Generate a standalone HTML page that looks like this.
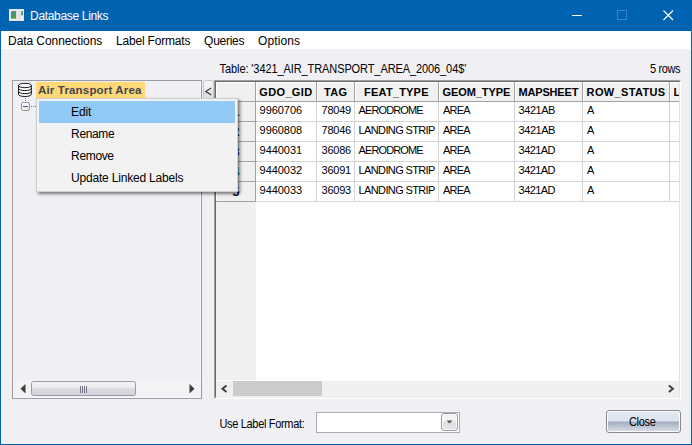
<!DOCTYPE html>
<html><head><meta charset="utf-8"><title>Database Links</title>
<style>
html,body{margin:0;padding:0;}
body{width:692px;height:445px;overflow:hidden;background:#efeff4;font-family:"Liberation Sans","DejaVu Sans",sans-serif;font-size:11px;color:#000;position:relative;}
.a{position:absolute;}
.t{position:absolute;white-space:nowrap;line-height:20px;height:20px;}
</style></head><body>
<div class="a" style="left:0;top:0;width:690px;height:444px;border-left:1px solid #0063b1;border-right:1px solid #0063b1;border-bottom:1px solid #0063b1;"></div>
<div class="a" style="left:0;top:0;width:692px;height:31px;background:#0063b1;"></div>
<svg class="a" style="left:9px;top:9px" width="16" height="12" viewBox="0 0 16 12">
<defs><linearGradient id="gi" x1="0" y1="0" x2="0.300" y2="1"><stop offset="0" stop-color="#6585b4"/><stop offset="0.450" stop-color="#4a9478"/><stop offset="1" stop-color="#3f9c48"/></linearGradient></defs>
<rect x="0" y="0" width="15" height="12" fill="#e7e4e1"/>
<rect x="1" y="1" width="13" height="10" fill="#f1efed"/>
<rect x="2" y="2" width="5" height="7.600" fill="url(#gi)"/>
<rect x="7" y="1.500" width="4.500" height="9" fill="#dedede"/>
<rect x="8" y="1.500" width="1.500" height="9" fill="#e8e8e8"/>
<rect x="12" y="2" width="2" height="4.400" fill="url(#gi)" opacity="0.850"/>
</svg>
<svg class="a" style="left:570px;top:8px" width="14" height="14"><rect x="2" y="7" width="10" height="1" fill="#fff"/></svg>
<svg class="a" style="left:615px;top:8px" width="14" height="14"><rect x="2.500" y="2.500" width="9" height="9" stroke="#3786cc" stroke-width="1" fill="none"/></svg>
<svg class="a" style="left:661px;top:8px" width="14" height="14"><path d="M2.500 2.500L12 12M12 2.500L2.500 12" stroke="#fff" stroke-width="1.150" fill="none"/></svg>
<div class="a" style="left:1px;top:31px;width:690px;height:18px;background:#fff;"></div>
<div class="a" style="left:12px;top:80px;width:188px;height:317px;border:1px solid #9c9ca4;box-shadow:inset -1px -1px 0 #f8f8fb;"></div>
<svg class="a" style="left:17px;top:82px" width="17" height="16" viewBox="0 0 17 16">
<path d="M1.500 3.500C1.500 0.600 14.300 0.600 14.300 3.500V12.300C14.300 15.200 1.500 15.200 1.500 12.300Z" fill="#fff" stroke="#111" stroke-width="1"/>
<path d="M1.500 3.500C1.500 6.400 14.300 6.400 14.300 3.500M1.500 6.400C1.500 9.300 14.300 9.300 14.300 6.400M1.500 9.400C1.500 12.300 14.300 12.300 14.300 9.400" fill="none" stroke="#111" stroke-width="1"/>
</svg>
<div class="a" style="left:36px;top:82px;width:109px;height:16px;background:#ffd978;"></div>
<div class="a" style="left:25px;top:98px;width:1px;height:1px;background:#777;box-shadow:0 2px 0 #777;"></div>
<div class="a" style="left:21px;top:102px;width:7px;height:7px;border:1px solid #989898;border-radius:2px;background:linear-gradient(135deg,#fff,#e4e4e4);"></div>
<div class="a" style="left:23px;top:106px;width:5px;height:1px;background:#3c50b4"></div>
<div class="a" style="left:31px;top:106px;width:1px;height:1px;background:#777;box-shadow:2px 0 0 #777,4px 0 0 #777;"></div>
<div class="a" style="left:13px;top:380px;width:188px;height:17px;background:#f3f3f6;"></div>
<svg class="a" style="left:13px;top:380px" width="188" height="17" viewBox="0 0 188 17">
<defs><linearGradient id="g1" x1="0" y1="0" x2="0" y2="1"><stop offset="0" stop-color="#f6f6f8"/><stop offset="0.48" stop-color="#e9e9ee"/><stop offset="0.52" stop-color="#dadae2"/><stop offset="1" stop-color="#d2d2dc"/></linearGradient></defs>
<path d="M12.500 4L7.500 8.800L12.500 13.600Z" fill="#3c3c3c"/>
<path d="M176.500 4L181.500 8.800L176.500 13.600Z" fill="#3c3c3c"/>
<rect x="18.500" y="1.500" width="104" height="14" rx="2" fill="url(#g1)" stroke="#9a9aa4"/>
<path d="M67.500 6V13M69.500 6V13M71.500 6V13M73.500 6V13" stroke="#787886" stroke-width="1"/>
</svg>
<div class="a" style="left:203px;top:80px;width:9px;height:19px;border:1px solid #c4cad2;border-radius:2px;background:linear-gradient(#f2f3f6 0%,#eceef2 54%,#d9dde5 58%,#e4e6ec 100%);"></div>
<svg class="a" style="left:204px;top:86px" width="9" height="11"><path d="M7.200 2L1.800 5.500L7.200 9" stroke="#3a3a3a" stroke-width="1.150" fill="none"/></svg>
<div class="a" style="left:214px;top:80px;width:465px;height:317px;border:1px solid #fff;border-left-color:#a0a0a0;border-top-color:#a0a0a0;"></div>
<div class="a" style="left:215px;top:81px;width:463px;height:315px;background:#fff;border:1px solid #e3e3e3;border-left-color:#696969;border-top-color:#696969;"></div>
<div class="a" style="left:216px;top:82px;width:463px;height:19px;background:#f1f1f1;"></div>
<div class="a" style="left:216px;top:82px;width:40px;height:298px;background:#f0f0f0;"></div>
<div class="a" style="left:216px;top:82px;width:463px;height:1px;background:#fff;"></div>
<div class="a" style="left:216px;top:82px;width:1px;height:120px;background:#fff;"></div>
<div class="a" style="left:316px;top:101px;width:1px;height:101px;background:#d4d4d4;"></div>
<div class="a" style="left:354px;top:101px;width:1px;height:101px;background:#d4d4d4;"></div>
<div class="a" style="left:438px;top:101px;width:1px;height:101px;background:#d4d4d4;"></div>
<div class="a" style="left:514px;top:101px;width:1px;height:101px;background:#d4d4d4;"></div>
<div class="a" style="left:582px;top:101px;width:1px;height:101px;background:#d4d4d4;"></div>
<div class="a" style="left:669px;top:101px;width:1px;height:101px;background:#d4d4d4;"></div>
<div class="a" style="left:256px;top:121px;width:423px;height:1px;background:#d4d4d4;"></div>
<div class="a" style="left:256px;top:141px;width:423px;height:1px;background:#d4d4d4;"></div>
<div class="a" style="left:256px;top:161px;width:423px;height:1px;background:#d4d4d4;"></div>
<div class="a" style="left:256px;top:181px;width:423px;height:1px;background:#d4d4d4;"></div>
<div class="a" style="left:256px;top:201px;width:423px;height:1px;background:#d4d4d4;"></div>
<div class="a" style="left:255px;top:82px;width:1px;height:19px;background:#a2a2a2;box-shadow:1px 0 0 #fff;"></div>
<div class="a" style="left:316px;top:82px;width:1px;height:19px;background:#a2a2a2;box-shadow:1px 0 0 #fff;"></div>
<div class="a" style="left:354px;top:82px;width:1px;height:19px;background:#a2a2a2;box-shadow:1px 0 0 #fff;"></div>
<div class="a" style="left:438px;top:82px;width:1px;height:19px;background:#a2a2a2;box-shadow:1px 0 0 #fff;"></div>
<div class="a" style="left:514px;top:82px;width:1px;height:19px;background:#a2a2a2;box-shadow:1px 0 0 #fff;"></div>
<div class="a" style="left:582px;top:82px;width:1px;height:19px;background:#a2a2a2;box-shadow:1px 0 0 #fff;"></div>
<div class="a" style="left:669px;top:82px;width:1px;height:19px;background:#a2a2a2;box-shadow:1px 0 0 #fff;"></div>
<div class="a" style="left:216px;top:101px;width:463px;height:1px;background:#a2a2a2;"></div>
<div class="a" style="left:255px;top:101px;width:1px;height:101px;background:#a2a2a2;"></div>
<div class="a" style="left:216px;top:121px;width:40px;height:1px;background:#a2a2a2;"></div>
<div class="a" style="left:216px;top:141px;width:40px;height:1px;background:#a2a2a2;"></div>
<div class="a" style="left:216px;top:161px;width:40px;height:1px;background:#a2a2a2;"></div>
<div class="a" style="left:216px;top:181px;width:40px;height:1px;background:#a2a2a2;"></div>
<div class="a" style="left:216px;top:201px;width:40px;height:1px;background:#a2a2a2;"></div>
<span class="t" style="left:673.5px;top:82.19px;font-size:11px;font-weight:bold;width:5.300px;overflow:hidden">L</span>
<div class="a" style="left:216px;top:381px;width:463px;height:17px;background:#f0f0f0"></div>
<div class="a" style="left:233px;top:381px;width:89px;height:15px;background:#cbcbcb"></div>
<svg class="a" style="left:219px;top:383px" width="10" height="11"><path d="M7.500 2.400L3.500 5.700L7.500 9" stroke="#404040" stroke-width="2" fill="none"/></svg>
<svg class="a" style="left:666px;top:383px" width="10" height="11"><path d="M2.900 2.400L6.900 5.700L2.900 9" stroke="#404040" stroke-width="2" fill="none"/></svg>
<div class="a" style="left:316px;top:412px;width:142px;height:19px;border:1px solid #abadb3;background:#fff;"></div>
<div class="a" style="left:441px;top:413px;width:15px;height:16px;border:1px solid #9a9aa0;border-radius:3px;background:linear-gradient(#f6f6f6 0%,#efeff1 50%,#dfdfe5 52%,#e6e6ec 100%);box-shadow:inset 0 0 0 1px #fafafa;"></div>
<svg class="a" style="left:446px;top:420px" width="7" height="4"><path d="M0.500 0.500H6.500L3.500 3.500Z" fill="#555"/></svg>
<div class="a" style="left:606px;top:410px;width:73px;height:21px;border:1px solid #848b8e;border-radius:3px;background:linear-gradient(#e3e8f2 0%,#dde3ef 48%,#a3adbe 52%,#c4cbd9 80%,#dce0ea 100%);box-shadow:inset 0 0 0 1px #fbfbfd;"></div>
<span class="t" style="left:30.10px;top:5.64px;font-size:12px;color:#fff;letter-spacing:-0.330px;">Database Links</span>
<span class="t" style="left:8.10px;top:30.74px;font-size:12px;letter-spacing:-0.081px;">Data Connections</span>
<span class="t" style="left:116.10px;top:30.74px;font-size:12px;letter-spacing:-0.200px;">Label Formats</span>
<span class="t" style="left:204.10px;top:30.74px;font-size:12px;letter-spacing:-0.276px;">Queries</span>
<span class="t" style="left:258.10px;top:30.74px;font-size:12px;letter-spacing:0.106px;">Options</span>
<span class="t" style="left:219.60px;top:59.19px;font-size:11px;letter-spacing:-0.093px;transform-origin:0 13.81px;transform:scaleY(1.13);">Table: &#x27;3421_AIR_TRANSPORT_AREA_2006_04$&#x27;</span>
<span class="t" style="left:650.10px;top:59.19px;font-size:11px;letter-spacing:-0.384px;transform-origin:0 13.81px;transform:scaleY(1.13);">5 rows</span>
<span class="t" style="left:38.00px;top:80.22px;font-size:11.5px;font-weight:bold;color:#45454d;letter-spacing:0.170px;">Air Transport Area</span>
<span class="t" style="left:219.40px;top:413.79px;font-size:11px;letter-spacing:-0.317px;transform-origin:0 13.81px;transform:scaleY(1.13);">Use Label Format:</span>
<span class="t" style="left:628.90px;top:412.39px;font-size:11px;letter-spacing:-0.305px;transform-origin:0 13.81px;transform:scaleY(1.13);">Close</span>
<span class="t" style="left:259.35px;top:82.19px;font-size:11px;font-weight:bold;letter-spacing:0.338px;">GDO_GID</span>
<span class="t" style="left:324.10px;top:82.19px;font-size:11px;font-weight:bold;letter-spacing:0.231px;">TAG</span>
<span class="t" style="left:364.10px;top:82.19px;font-size:11px;font-weight:bold;letter-spacing:0.204px;">FEAT_TYPE</span>
<span class="t" style="left:442.60px;top:82.19px;font-size:11px;font-weight:bold;letter-spacing:-0.097px;">GEOM_TYPE</span>
<span class="t" style="left:518.60px;top:82.19px;font-size:11px;font-weight:bold;letter-spacing:-0.191px;">MAPSHEET</span>
<span class="t" style="left:586.60px;top:82.19px;font-size:11px;font-weight:bold;letter-spacing:0.347px;">ROW_STATUS</span>
<span class="t" style="left:259.60px;top:100.19px;font-size:11px;letter-spacing:-0.061px;">9960706</span>
<span class="t" style="left:321.60px;top:100.19px;font-size:11px;letter-spacing:-0.239px;">78049</span>
<span class="t" style="left:358.60px;top:100.19px;font-size:11px;letter-spacing:-0.892px;">AERODROME</span>
<span class="t" style="left:442.90px;top:100.19px;font-size:11px;letter-spacing:-0.717px;">AREA</span>
<span class="t" style="left:518.60px;top:100.19px;font-size:11px;letter-spacing:-0.459px;">3421AB</span>
<span class="t" style="left:586.90px;top:100.19px;font-size:11px;">A</span>
<span class="t" style="left:259.60px;top:120.19px;font-size:11px;letter-spacing:-0.061px;">9960808</span>
<span class="t" style="left:321.60px;top:120.19px;font-size:11px;letter-spacing:-0.239px;">78046</span>
<span class="t" style="left:358.60px;top:120.19px;font-size:11px;letter-spacing:-0.635px;">LANDING STRIP</span>
<span class="t" style="left:442.90px;top:120.19px;font-size:11px;letter-spacing:-0.717px;">AREA</span>
<span class="t" style="left:518.60px;top:120.19px;font-size:11px;letter-spacing:-0.459px;">3421AB</span>
<span class="t" style="left:586.90px;top:120.19px;font-size:11px;">A</span>
<span class="t" style="left:259.60px;top:140.19px;font-size:11px;letter-spacing:-0.061px;">9440031</span>
<span class="t" style="left:321.60px;top:140.19px;font-size:11px;letter-spacing:-0.239px;">36086</span>
<span class="t" style="left:358.60px;top:140.19px;font-size:11px;letter-spacing:-0.892px;">AERODROME</span>
<span class="t" style="left:442.90px;top:140.19px;font-size:11px;letter-spacing:-0.717px;">AREA</span>
<span class="t" style="left:518.60px;top:140.19px;font-size:11px;letter-spacing:-0.561px;">3421AD</span>
<span class="t" style="left:586.90px;top:140.19px;font-size:11px;">A</span>
<span class="t" style="left:259.60px;top:160.19px;font-size:11px;letter-spacing:-0.061px;">9440032</span>
<span class="t" style="left:321.60px;top:160.19px;font-size:11px;letter-spacing:-0.239px;">36091</span>
<span class="t" style="left:358.60px;top:160.19px;font-size:11px;letter-spacing:-0.635px;">LANDING STRIP</span>
<span class="t" style="left:442.90px;top:160.19px;font-size:11px;letter-spacing:-0.717px;">AREA</span>
<span class="t" style="left:518.60px;top:160.19px;font-size:11px;letter-spacing:-0.561px;">3421AD</span>
<span class="t" style="left:586.90px;top:160.19px;font-size:11px;">A</span>
<span class="t" style="left:259.60px;top:180.19px;font-size:11px;letter-spacing:-0.061px;">9440033</span>
<span class="t" style="left:321.60px;top:180.19px;font-size:11px;letter-spacing:-0.239px;">36093</span>
<span class="t" style="left:358.60px;top:180.19px;font-size:11px;letter-spacing:-0.635px;">LANDING STRIP</span>
<span class="t" style="left:442.90px;top:180.19px;font-size:11px;letter-spacing:-0.717px;">AREA</span>
<span class="t" style="left:518.60px;top:180.19px;font-size:11px;letter-spacing:-0.561px;">3421AD</span>
<span class="t" style="left:586.90px;top:180.19px;font-size:11px;">A</span>
<span class="t" style="left:232.20px;top:101.80px;font-size:13px;font-weight:bold;color:#10183c;">1</span>
<span class="t" style="left:232.20px;top:121.80px;font-size:13px;font-weight:bold;color:#10183c;">2</span>
<span class="t" style="left:232.20px;top:141.80px;font-size:13px;font-weight:bold;color:#10183c;">3</span>
<span class="t" style="left:232.20px;top:161.80px;font-size:13px;font-weight:bold;color:#10183c;">4</span>
<span class="t" style="left:232.20px;top:181.80px;font-size:13px;font-weight:bold;color:#10183c;">5</span>
<div class="a" style="left:36px;top:98px;width:200px;height:92px;background:#f2f2f2;border:1px solid #cfcfcf;box-shadow:2px 2px 3px rgba(0,0,0,0.5);"></div>
<div class="a" style="left:39px;top:101px;width:196px;height:22px;background:#91c9f7;"></div>
<span class="t" style="left:71.10px;top:101.84px;font-size:12px;letter-spacing:-0.147px;">Edit</span>
<span class="t" style="left:71.10px;top:123.84px;font-size:12px;letter-spacing:-0.377px;">Rename</span>
<span class="t" style="left:71.10px;top:145.84px;font-size:12px;letter-spacing:-0.348px;">Remove</span>
<span class="t" style="left:71.10px;top:167.84px;font-size:12px;letter-spacing:-0.200px;">Update Linked Labels</span>
</body></html>
